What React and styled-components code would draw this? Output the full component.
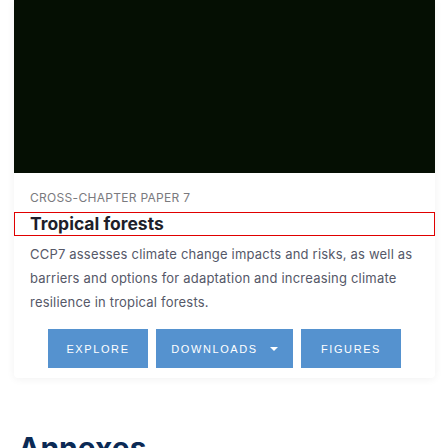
import React from "react";
import styled, { createGlobalStyle } from "styled-components";

const GlobalStyle = createGlobalStyle`
  body {
    margin: 0;
    background: #ffffff;
    font-family: "Inter", "Liberation Sans", sans-serif;
  }
`;

const Page = styled.div`
  padding: 0 13px 0 14px;
`;

const Card = styled.article`
  background: #ffffff;
  border-radius: 0 0 4px 4px;
  box-shadow: 0 1px 8px rgba(0, 0, 0, 0.06);
  padding-bottom: 10px;
`;

const Cover = styled.div`
  height: 173px;
  background: #050f03;
`;

const Label = styled.div`
  margin: 18px 16px 7px;
  font-size: 12px;
  line-height: 14px;
  letter-spacing: 0.3px;
  color: #7a7a7e;
  text-transform: uppercase;
`;

const Title = styled.h2`
  margin: 0;
  height: 24px;
  box-sizing: border-box;
  border: 1px solid #e00000;
  padding: 0 15px;
  font-size: 17.5px;
  line-height: 22px;
  font-weight: 700;
  color: #1e1f2a;
`;

const Summary = styled.p`
  margin: 6px 16px 0;
  font-size: 13px;
  line-height: 24px;
  letter-spacing: 0.2px;
  color: #555868;
`;

const Actions = styled.div`
  display: flex;
  justify-content: center;
  gap: 8px;
  margin-top: 15px;
`;

const Action = styled.button`
  display: flex;
  align-items: center;
  justify-content: center;
  gap: 12px;
  width: ${(p) => p.$width}px;
  height: 39px;
  border: 0;
  background: #5592cf;
  color: #ffffff;
  font-family: "Liberation Sans", Arial, sans-serif;
  font-size: 11px;
  letter-spacing: 1.6px;
  text-transform: uppercase;
`;

const Caret = styled.span`
  width: 0;
  height: 0;
  border-left: 4px solid transparent;
  border-right: 4px solid transparent;
  border-top: 4px solid #ffffff;
`;

const SectionHeading = styled.h1`
  margin: 52px 4px 0;
  font-size: 30px;
  line-height: 36px;
  font-weight: 700;
  color: #0b2a55;
`;

export default function App() {
  return (
    <>
      <GlobalStyle />
      <Page>
        <Card>
          <Cover />
          <Label>Cross-Chapter Paper 7</Label>
          <Title>Tropical forests</Title>
          <Summary>
            CCP7 assesses climate change impacts and risks, as well as
            barriers and options for adaptation and increasing climate
            resilience in tropical forests.
          </Summary>
          <Actions>
            <Action $width={100}>Explore</Action>
            <Action $width={137}>
              Downloads <Caret />
            </Action>
            <Action $width={100}>Figures</Action>
          </Actions>
        </Card>
        <SectionHeading>Annexes</SectionHeading>
      </Page>
    </>
  );
}
